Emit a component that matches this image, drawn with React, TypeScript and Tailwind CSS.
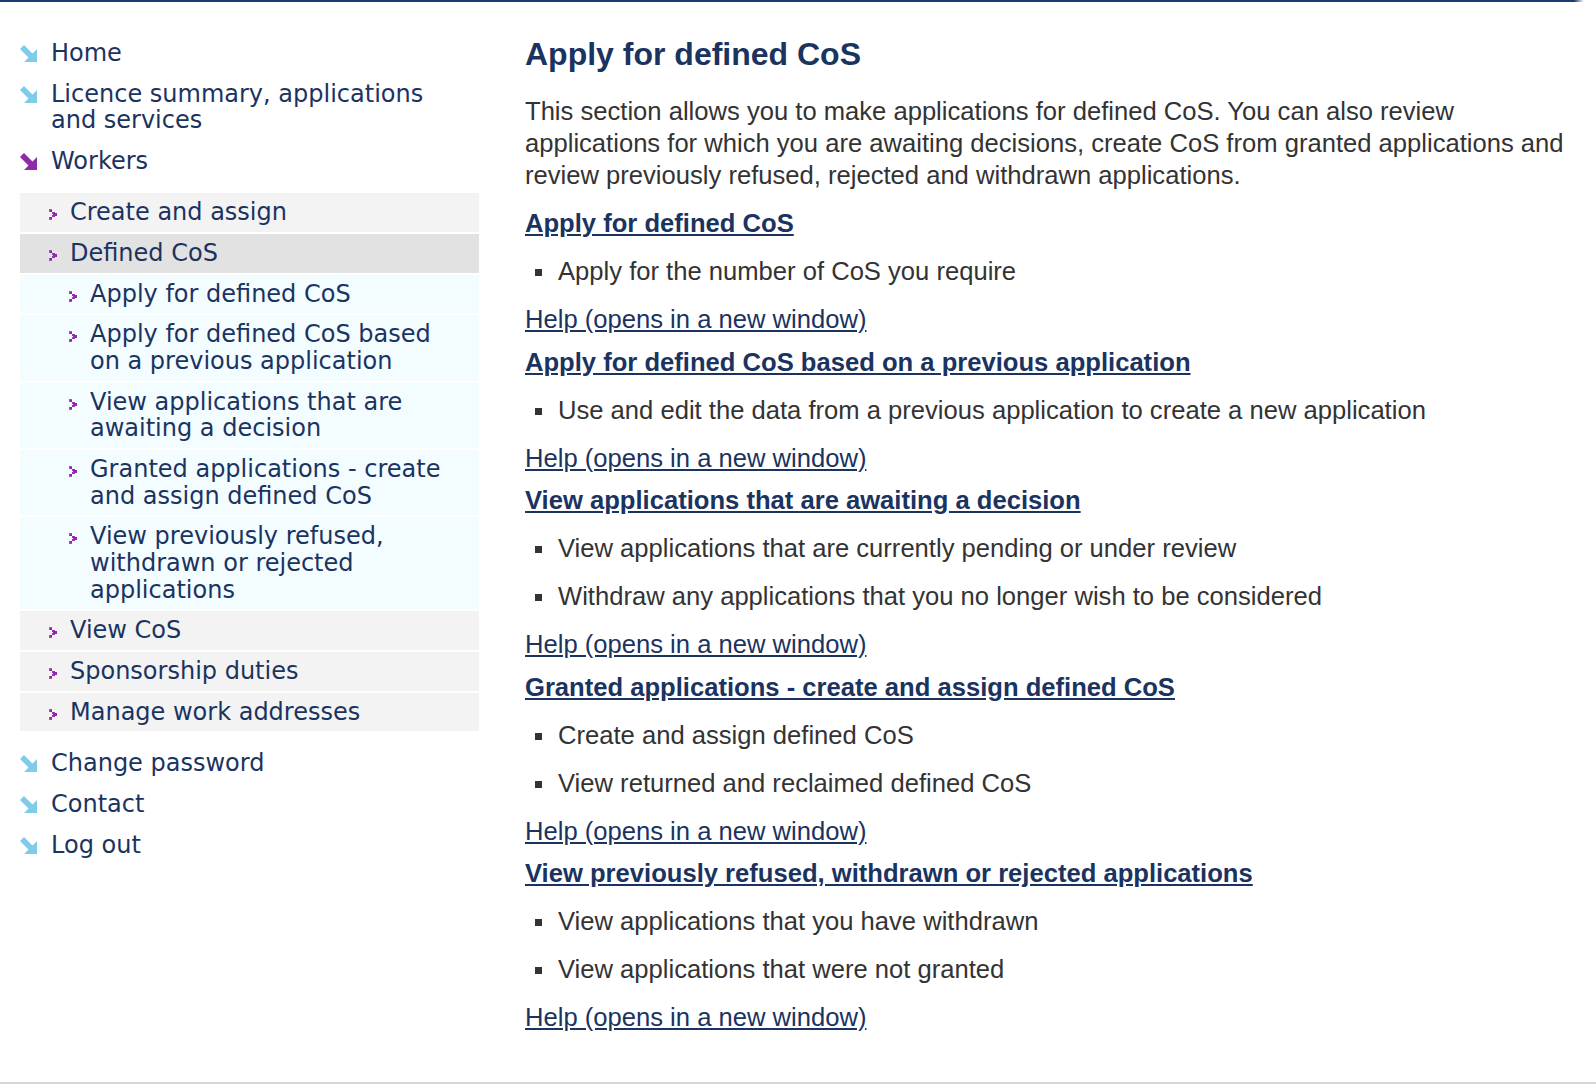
import React from "react";

function Arrow({ purple }: { purple?: boolean }) {
  return (
    <svg width="18" height="18" viewBox="0 0 18 18" className="block">
      <polygon
        points="0,4 4,0 12.5,8.5 17,4 17,17 4,17 8.5,12.5"
        fill={purple ? "#8e2ba8" : "#7fcbea"}
      />
    </svg>
  );
}

function Chevron() {
  return (
    <svg width="8" height="11" viewBox="0 0 8 11" className="block" shapeRendering="crispEdges">
      <rect x="0" y="0" width="3" height="3" fill="#a552c2" />
      <rect x="1" y="1" width="2" height="2" fill="#8f26ab" />
      <rect x="3" y="3" width="3" height="2" fill="#9a30b4" />
      <rect x="4" y="4" width="4" height="3" fill="#8f26ab" />
      <rect x="3" y="6" width="3" height="2" fill="#9a30b4" />
      <rect x="0" y="8" width="3" height="3" fill="#a552c2" />
      <rect x="1" y="8" width="2" height="2" fill="#8f26ab" />
    </svg>
  );
}

function TopItem({ label, purple, last }: { label: string; purple?: boolean; last?: boolean }) {
  return (
    <li className={last ? "flex items-start" : "flex items-start mb-[14px]"}>
      <span className="w-[31px] shrink-0 pt-[5px]">
        <Arrow purple={purple} />
      </span>
      <a className="text-[#1b335f] cursor-pointer">{label}</a>
    </li>
  );
}

type Row = { label: string; level: 1 | 2; selected?: boolean };

const rows: Row[] = [
  { label: "Create and assign", level: 1 },
  { label: "Defined CoS", level: 1, selected: true },
  { label: "Apply for defined CoS", level: 2 },
  { label: "Apply for defined CoS based on a previous application", level: 2 },
  { label: "View applications that are awaiting a decision", level: 2 },
  { label: "Granted applications - create and assign defined CoS", level: 2 },
  { label: "View previously refused, withdrawn or rejected applications", level: 2 },
  { label: "View CoS", level: 1 },
  { label: "Sponsorship duties", level: 1 },
  { label: "Manage work addresses", level: 1 },
];

function SubRow({ row }: { row: Row }) {
  const cls =
    row.level === 2
      ? "flex items-start py-[6.05px] pr-4 pl-[49px] bg-[#f3fcff]"
      : row.selected
      ? "flex items-start py-[6.05px] pr-4 pl-[29px] bg-[#e2e2e2]"
      : "flex items-start py-[6.05px] pr-4 pl-[29px] bg-[#f3f3f3]";
  return (
    <li className={cls}>
      <span className="shrink-0 mt-[10px] mr-[13px]">
        <Chevron />
      </span>
      <a className="text-[#1b335f] cursor-pointer">{row.label}</a>
    </li>
  );
}

type Section = { title: string; bullets: string[] };

const sections: Section[] = [
  { title: "Apply for defined CoS", bullets: ["Apply for the number of CoS you require"] },
  {
    title: "Apply for defined CoS based on a previous application",
    bullets: ["Use and edit the data from a previous application to create a new application"],
  },
  {
    title: "View applications that are awaiting a decision",
    bullets: [
      "View applications that are currently pending or under review",
      "Withdraw any applications that you no longer wish to be considered",
    ],
  },
  {
    title: "Granted applications - create and assign defined CoS",
    bullets: ["Create and assign defined CoS", "View returned and reclaimed defined CoS"],
  },
  {
    title: "View previously refused, withdrawn or rejected applications",
    bullets: ["View applications that you have withdrawn", "View applications that were not granted"],
  },
];

function SectionBlock({ s, first }: { s: Section; first?: boolean }) {
  return (
    <div className={first ? "mt-[16px]" : "mt-[10.5px]"}>
      <a className="block w-fit font-bold underline text-[#1b335f] cursor-pointer">{s.title}</a>
      <ul className="mt-[16px] flex flex-col gap-[16px]">
        {s.bullets.map((b) => (
          <li key={b} className="flex items-start text-[#333333]">
            <span className="shrink-0 w-[7px] h-[7px] bg-[#333333] ml-[10px] mr-[16px] mt-[14px]" />
            <span>{b}</span>
          </li>
        ))}
      </ul>
      <a className="block w-fit mt-[16px] underline text-[#1b335f] cursor-pointer">
        Help (opens in a new window)
      </a>
    </div>
  );
}

export default function App() {
  return (
    <div className="min-h-[1084px] flex flex-col bg-white">
      <div className="h-[2px] w-[1584px] bg-[linear-gradient(to_right,#1d3a6e_calc(100%-10px),#ffffff)]" />
      <div className="flex">
        <nav className="ml-[20px] w-[459px] shrink-0 pt-[38px] font-['DejaVu_Sans',Verdana,sans-serif] text-[24px] leading-[26.6px]">
          <ul className="pr-4">
            <TopItem label="Home" />
            <TopItem label="Licence summary, applications and services" />
            <li className="flex items-start">
              <span className="w-[31px] shrink-0 pt-[5px]">
                <Arrow purple />
              </span>
              <a className="text-[#1b335f] cursor-pointer">Workers</a>
            </li>
          </ul>
          <ul className="mt-[19px] mb-[19px] flex flex-col gap-[2px]">
            {rows.map((r) => (
              <SubRow key={r.label} row={r} />
            ))}
          </ul>
          <ul className="pr-4">
            <li className="flex items-start mb-[14px]">
              <span className="w-[31px] shrink-0 pt-[5px]">
                <Arrow />
              </span>
              <a className="text-[#1b335f] cursor-pointer">Change password</a>
            </li>
            <li className="flex items-start mb-[14.5px]">
              <span className="w-[31px] shrink-0 pt-[5px]">
                <Arrow />
              </span>
              <a className="text-[#1b335f] cursor-pointer">Contact</a>
            </li>
            <TopItem label="Log out" last />
          </ul>
        </nav>
        <main className="ml-[46px] w-[1055px] pt-[32px] font-['Liberation_Sans',Arial,sans-serif] text-[25.6px] leading-[32px]">
          <h1 className="text-[32px] leading-[40px] font-bold text-[#1b335f]">Apply for defined CoS</h1>
          <p className="mt-[21px] text-[#333333]">
            This section allows you to make applications for defined CoS. You can also review
            applications for which you are awaiting decisions, create CoS from granted applications and
            review previously refused, rejected and withdrawn applications.
          </p>
          {sections.map((s, i) => (
            <SectionBlock key={s.title} s={s} first={i === 0} />
          ))}
        </main>
      </div>
      <div className="mt-auto h-[2px] bg-[#d6d6d6]" />
    </div>
  );
}
